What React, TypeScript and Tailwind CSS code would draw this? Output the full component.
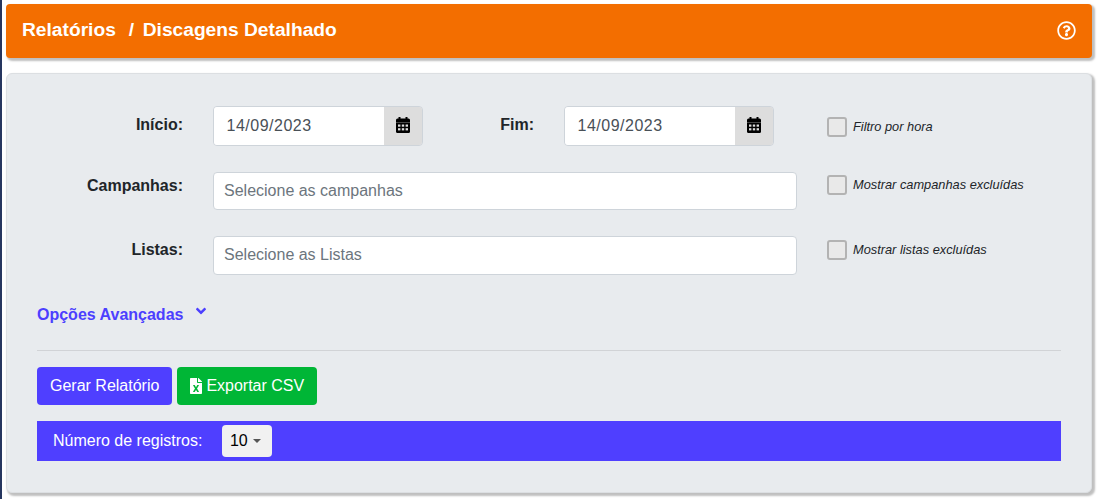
import { FaFileExcel, FaRegQuestionCircle, FaAngleDown } from "react-icons/fa";

function CalendarIcon() {
  return (
    <svg width="14" height="16" viewBox="0 0 14 16" fill="none">
      <rect x="2.5" y="0" width="2" height="3" fill="#000" />
      <rect x="9.5" y="0" width="2" height="3" fill="#000" />
      <rect x="0" y="1.5" width="14" height="14.5" rx="1.5" fill="#000" />
      <rect x="0" y="5" width="14" height="0.8" fill="#555" />
      <rect x="2" y="7.5" width="2.4" height="2.2" fill="#ddd" />
      <rect x="5.8" y="7.5" width="2.4" height="2.2" fill="#ddd" />
      <rect x="9.6" y="7.5" width="2.4" height="2.2" fill="#ddd" />
      <rect x="2" y="11.2" width="2.4" height="2.2" fill="#ddd" />
      <rect x="5.8" y="11.2" width="2.4" height="2.2" fill="#ddd" />
      <rect x="9.6" y="11.2" width="2.4" height="2.2" fill="#ddd" />
    </svg>
  );
}

function DateField({ value }: { value: string }) {
  return (
    <div className="flex h-[40px] w-[210px] overflow-hidden rounded-[4px] border border-[#ced4da]">
      <div className="flex flex-1 items-center bg-white pl-[12.5px] text-[16px] tracking-[0.5px] text-[#495057]">{value}</div>
      <div className="flex w-[38px] items-center justify-center bg-[#dddddd] pb-[2px] text-black">
        <CalendarIcon />
      </div>
    </div>
  );
}

function Check({ label, className }: { label: string; className: string }) {
  return (
    <div className={`flex items-center gap-[6px] ${className}`}>
      <span className="h-[20px] w-[20px] rounded-[3px] border-2 border-[#b3b3b3] bg-[#e9e9e9]" />
      <span className="text-[12.8px] italic text-[#212529]">{label}</span>
    </div>
  );
}

function Label({ children, className = "" }: { children: string; className?: string }) {
  return <span className={`text-right text-[16px] font-bold text-[#212529] ${className}`}>{children}</span>;
}

function TextField({ placeholder, h }: { placeholder: string; h: string }) {
  return (
    <div className={`flex w-[584px] items-center rounded-[4px] border border-[#ced4da] bg-white pl-[10px] text-[16px] text-[#6c757d] ${h}`}>
      {placeholder}
    </div>
  );
}

export default function App() {
  return (
    <div className="h-[499px] w-[1100px] overflow-hidden border-l-2 border-[#26365f] bg-white pl-[4px] pt-[4px] font-['Liberation_Sans',sans-serif]">
      <div className="flex h-[54px] w-[1086px] items-center justify-between rounded-[4px] bg-[#f36e00] px-[16px] pb-[2px] text-[19.2px] font-bold text-white shadow-[2px_2px_2px_1px_rgba(0,0,0,0.25)]">
        <span>
          Relatórios<span className="ml-[13px]">/</span><span className="ml-[8.5px]">Discagens Detalhado</span>
        </span>
        <FaRegQuestionCircle className="h-[19px] w-[19px]" />
      </div>

      <div className="mt-[15px] h-[420px] w-[1086px] rounded-[6px] border border-[#dcdfe2] bg-[#e8ebee] px-[30px] pt-[32px] shadow-[2px_2px_2px_1px_rgba(0,0,0,0.25)]">
        <div className="flex h-[40px] items-center">
          <Label className="w-[146px] -translate-y-px">Início:</Label>
          <div className="ml-[30px]"><DateField value="14/09/2023" /></div>
          <Label className="ml-[77px] w-[34px] -translate-y-px">Fim:</Label>
          <div className="ml-[30px]"><DateField value="14/09/2023" /></div>
          <Check label="Filtro por hora" className="ml-[53px] translate-y-[1px]" />
        </div>
        <div className="mt-[26px] flex h-[38px] items-center">
          <Label className="w-[146px] -translate-y-[5px]">Campanhas:</Label>
          <div className="ml-[30px]"><TextField placeholder="Selecione as campanhas" h="h-[38px]" /></div>
          <Check label="Mostrar campanhas excluídas" className="ml-[30px] -translate-y-[6px]" />
        </div>
        <div className="mt-[26px] flex h-[39px] items-center">
          <Label className="w-[146px] -translate-y-[6px]">Listas:</Label>
          <div className="ml-[30px]"><TextField placeholder="Selecione as Listas" h="h-[39px] pb-[1px]" /></div>
          <Check label="Mostrar listas excluídas" className="ml-[30px] -translate-y-[6px]" />
        </div>

        <div className="mt-[28px] flex items-center text-[16px] font-bold text-[#4c3fff]">
          <span>Opções Avançadas</span>
          <FaAngleDown className="ml-[10px] h-[16px] w-[16px] -translate-y-[4px]" />
        </div>

        <div className="mt-[23px] h-px bg-[#d1d3d6]" />

        <div className="mt-[16px] flex gap-[5px] text-[16px] text-white">
          <div className="flex h-[38px] items-center rounded-[4px] bg-[#4f3fff] px-[13px]">Gerar Relatório</div>
          <div className="flex h-[38px] items-center gap-[4px] rounded-[4px] bg-[#00b636] pl-[13px] pr-[13px]">
            <FaFileExcel className="h-[16px] w-[12px]" />
            Exportar CSV
          </div>
        </div>

        <div className="mt-[16px] flex h-[40px] items-center bg-[#4f3fff] pl-[16px] text-[16px] text-white">
          <span>Número de registros:</span>
          <div className="ml-[20px] flex h-[32px] w-[50px] items-center rounded-[4px] bg-[#f1f1f1] pl-[7.5px] text-black">
            <span>10</span>
            <span className="ml-[5.5px] h-0 w-0 border-x-[4px] border-t-[4px] border-x-transparent border-t-[#555555]" />
          </div>
        </div>
      </div>
    </div>
  );
}
